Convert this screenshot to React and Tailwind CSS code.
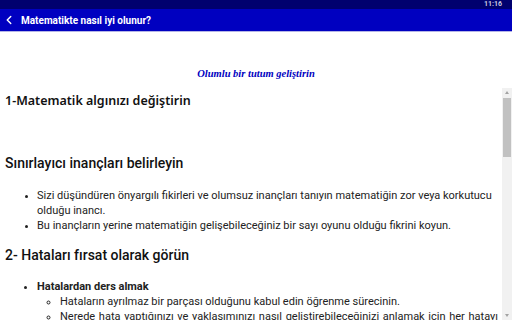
import { ChevronLeft } from "lucide-react";

const App = () => {
  return (
    <div className="w-[512px] h-[320px] overflow-hidden bg-white flex flex-col" style={{ fontFamily: "Roboto, 'Noto Sans', sans-serif" }}>
      {/* status bar */}
      <div className="h-[9px] bg-[#00006e] flex items-center justify-end pr-[10px]">
        <span className="text-[7px] leading-none text-[#c8c8e0] font-bold">11:16</span>
      </div>
      {/* app bar */}
      <div className="h-[23px] bg-[#0000c0] flex items-center border-b border-[#b4b4e6]">
        <ChevronLeft className="w-[14px] h-[14px] text-white ml-[2px]" strokeWidth={2.5} />
        <span className="ml-[5px] text-white text-[10px] font-bold">Matematikte nasıl iyi olunur?</span>
      </div>

      <div className="h-[56px] flex items-center justify-center pt-[27px]">
        <span className="text-[#0000c0] italic font-bold text-[10.5px]" style={{ fontFamily: "'Liberation Serif', serif" }}>
          Olumlu bir tutum geliştirin
        </span>
      </div>

      <div className="flex-1 flex min-h-0">
        <div className="flex-1 overflow-hidden pl-[5px] pr-[4px] text-[#111]">
          <h2 className="mt-[3px] text-[12.5px] leading-[20px] font-semibold" style={{ fontFamily: "'Noto Sans', sans-serif" }}>
            1-Matematik algınızı değiştirin
          </h2>
          <h2 className="mt-[42px] text-[14px] leading-[20px] font-medium">Sınırlayıcı inançları belirleyin</h2>
          <ul className="mt-[15px] list-disc pl-[32px] text-[11px] leading-[15px] text-[#222] marker:text-[9px]">
            <li>Sizi düşündüren önyargılı fikirleri ve olumsuz inançları tanıyın matematiğin zor veya korkutucu olduğu inancı.</li>
            <li>Bu inançların yerine matematiğin gelişebileceğiniz bir sayı oyunu olduğu fikrini koyun.</li>
          </ul>
          <h2 className="mt-[12px] text-[14px] leading-[20px] font-medium">2- Hataları fırsat olarak görün</h2>
          <ul className="mt-[14px] list-disc pl-[32px] text-[11px] leading-[15px] text-[#222]">
            <li>
              <span className="font-bold">Hatalardan ders almak</span>
              <ul className="list-[circle] pl-[23px]">
                <li>Hataların ayrılmaz bir parçası olduğunu kabul edin öğrenme sürecinin.</li>
                <li className="text-justify">Nerede hata yaptığınızı ve yaklaşımınızı nasıl geliştirebileceğinizi anlamak için her hatayı analiz edin.</li>
              </ul>
            </li>
          </ul>
        </div>
        {/* scrollbar */}
        <div className="w-[10px] bg-[#f1f1f1] flex flex-col items-center pt-[3px] pb-[3px]">
          <div className="w-0 h-0 border-l-[2.5px] border-r-[2.5px] border-b-[3px] border-l-transparent border-r-transparent border-b-[#a3a3a3]" />
          <div className="mt-[4px] w-[8px] h-[59px] bg-[#c1c1c1]" />
          <div className="flex-1" />
          <div className="w-0 h-0 border-l-[2.5px] border-r-[2.5px] border-t-[3px] border-l-transparent border-r-transparent border-t-[#a3a3a3]" />
        </div>
      </div>
    </div>
  );
};

export default App;
